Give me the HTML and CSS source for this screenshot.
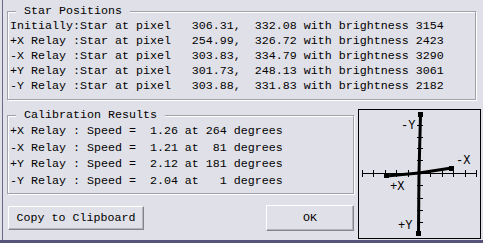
FILE: index.html
```html
<!DOCTYPE html>
<html lang="en">

<head>
    <meta charset="UTF-8">
    <title>Calibration</title>
    <link rel="stylesheet" href="styles.css">
</head>

<body>
    <div class="window">
        <div class="panel">
            <!-- Star positions per relay -->
            <fieldset class="group positions">
                <legend>Star Positions</legend>
                <div class="row">Initially:Star at pixel   306.31,  332.08 with brightness 3154</div>
                <div class="row">+X Relay :Star at pixel   254.99,  326.72 with brightness 2423</div>
                <div class="row">-X Relay :Star at pixel   303.83,  334.79 with brightness 3290</div>
                <div class="row">+Y Relay :Star at pixel   301.73,  248.13 with brightness 3061</div>
                <div class="row">-Y Relay :Star at pixel   303.88,  331.83 with brightness 2182</div>
            </fieldset>

            <div class="lower">
                <div class="left-col">
                    <fieldset class="group calib">
                        <legend>Calibration Results</legend>
                        <div class="row">+X Relay : Speed =  1.26 at 264 degrees</div>
                        <div class="row">-X Relay : Speed =  1.21 at  81 degrees</div>
                        <div class="row">+Y Relay : Speed =  2.12 at 181 degrees</div>
                        <div class="row">-Y Relay : Speed =  2.04 at   1 degrees</div>
                    </fieldset>
                    <div class="buttons">
                        <button class="button copy-btn">Copy to Clipboard</button>
                        <button class="button ok-btn">OK</button>
                    </div>
                </div>

                <!-- Relay vector plot -->
                <div class="plot">
                    <svg width="121" height="128" viewBox="0 0 121 128" shape-rendering="crispEdges">
                        <g stroke="#000" stroke-width="1">
                            <line x1="3" y1="63.5" x2="118" y2="63.5" />
                            <line x1="60.5" y1="2" x2="60.5" y2="126" />
                            <!-- x ticks -->
                            <line x1="3.5" y1="60" x2="3.5" y2="67" />
                            <line x1="14.5" y1="60" x2="14.5" y2="67" />
                            <line x1="26.5" y1="60" x2="26.5" y2="67" />
                            <line x1="37.5" y1="60" x2="37.5" y2="67" />
                            <line x1="49.5" y1="60" x2="49.5" y2="67" />
                            <line x1="71.5" y1="60" x2="71.5" y2="67" />
                            <line x1="83.5" y1="60" x2="83.5" y2="67" />
                            <line x1="94.5" y1="60" x2="94.5" y2="67" />
                            <line x1="106.5" y1="60" x2="106.5" y2="67" />
                            <line x1="117.5" y1="60" x2="117.5" y2="67" />
                            <!-- y ticks -->
                            <line x1="58" y1="15.5" x2="64" y2="15.5" />
                            <line x1="58" y1="27.5" x2="64" y2="27.5" />
                            <line x1="58" y1="38.5" x2="64" y2="38.5" />
                            <line x1="58" y1="50.5" x2="64" y2="50.5" />
                            <line x1="58" y1="75.5" x2="64" y2="75.5" />
                            <line x1="58" y1="88.5" x2="64" y2="88.5" />
                            <line x1="58" y1="100.5" x2="64" y2="100.5" />
                            <line x1="58" y1="112.5" x2="64" y2="112.5" />
                        </g>
                        <g stroke="#000" stroke-width="3" shape-rendering="auto">
                            <line x1="60" y1="63" x2="61.5" y2="4.5" />
                            <line x1="60" y1="63" x2="59.5" y2="123" />
                            <line x1="60" y1="63" x2="27.5" y2="66" />
                            <line x1="60" y1="63" x2="92.5" y2="58" />
                        </g>
                        <g fill="#000">
                            <rect x="59" y="2" width="5" height="5" />
                            <rect x="57" y="121" width="5" height="5" />
                            <rect x="25" y="63" width="5" height="5" />
                            <rect x="90" y="56" width="5" height="5" />
                        </g>
                        <g class="axis-label">
                            <text x="42" y="19">-Y</text>
                            <text x="97" y="54">-X</text>
                            <text x="31" y="80">+X</text>
                            <text x="39" y="119">+Y</text>
                        </g>
                    </svg>
                </div>
            </div>
        </div>
    </div>
</body>

</html>
```

FILE: styles.css
```css
body {
    margin: 0;
    background-color: #e0e0e8;
    font-family: "Liberation Mono", monospace;
    font-size: 11.67px;
    color: #000;
}

.window {
    width: 483px;
    height: 243px;
    box-sizing: border-box;
    padding-left: 2px;
    border-bottom: 3px solid #55557a;
}

.panel {
    height: 100%;
    box-sizing: border-box;
    border-left: 1px solid #6a6a88;
    padding: 4px 0 0 4px;
}

.group {
    margin: 0;
    padding: 0 0 5px 2px;
    box-sizing: border-box;
    border: 1px solid #a0a0a8;
    box-shadow: 1px 1px 0 #fff, inset 1px 1px 0 #fff;
}

.group legend {
    margin-left: 6px;
    padding: 0 8px;
    line-height: 15px;
    background-color: #e0e0e8;
}

.row {
    white-space: pre;
    line-height: 15px;
}

.positions {
    width: 469px;
}

.lower {
    display: flex;
    gap: 4px;
    margin-top: 8px;
}

.calib {
    width: 347px;
    padding-bottom: 4px;
}

.calib .row {
    line-height: 16.5px;
}

.buttons {
    display: flex;
    justify-content: space-between;
    align-items: center;
    margin-top: 11px;
}

.button {
    margin: 0;
    padding: 0;
    font-family: inherit;
    font-size: inherit;
    color: #000;
    background-color: #e0e0e8;
    border: 1px solid;
    border-color: #fff #85858c #85858c #fff;
    box-shadow: inset -1px -1px 0 #b4b4bc;
    cursor: default;
}

.copy-btn {
    margin-left: 1px;
    width: 136px;
    height: 24px;
}

.ok-btn {
    width: 88px;
    height: 26px;
}

.plot {
    margin-top: 1px;
    width: 123px;
    height: 130px;
    box-sizing: border-box;
    border: 1px solid #000;
}

.plot svg {
    display: block;
}

.axis-label text {
    font-family: "Liberation Mono", monospace;
    font-size: 12px;
    fill: #000;
}
```
